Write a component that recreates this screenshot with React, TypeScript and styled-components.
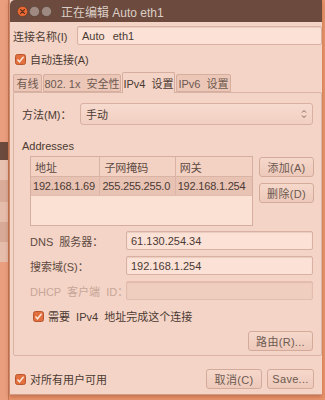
import React from 'react';
import styled, { createGlobalStyle } from 'styled-components';

const GlobalStyle = createGlobalStyle`
  html, body {
    margin: 0;
    padding: 0;
    background: #e9946c;
  }
  * {
    box-sizing: border-box;
  }
`

const Page = styled.div`
  display: flex;
  width: 325px;
  height: 400px;
  background: #e9946c;
  overflow: hidden;
  font-family: "Liberation Sans", "Noto Sans CJK SC", sans-serif;
  font-size: 11px;
  color: #4b3a33;
`

const Backdrop = styled.div`
  width: 9px;
  display: flex;
  flex-direction: column;
  flex-shrink: 0;
`

const BackdropBlock = styled.div<{ $h: number; $bg: string }>`
  height: ${p => p.$h}px;
  background: ${p => p.$bg};
  border-right: 1px solid #c77a58;
`

const Window = styled.div`
  width: 313px;
  height: 395px;
  display: flex;
  flex-direction: column;
  background: #f4d4c6;
  border-left: 1px solid #c98a70;
  border-bottom: 1px solid #d29a82;
  box-shadow: 0 2px 4px rgba(120, 50, 20, 0.35);
`

const TitleBar = styled.div`
  height: 22px;
  display: flex;
  align-items: center;
  padding-left: 7px;
  background: #6c4b3e;
  border-top-left-radius: 5px;
  color: #dccfc7;
  font-size: 12px;
  flex-shrink: 0;
`

const WinButtons = styled.div`
  display: flex;
  gap: 1px;
  margin-right: 9px;
`

const TitleText = styled.span`
  white-space: nowrap;
`

const Content = styled.div`
  flex: 1;
  display: flex;
  flex-direction: column;
  padding: 4px 0 0 3px;
`

const NameRow = styled.div`
  display: flex;
  align-items: center;
  height: 19px;
`

const NameLabel = styled.span`
  width: 64px;
  white-space: nowrap;
`

const Input = styled.div<{ $disabled?: boolean }>`
  flex: 1;
  height: 19px;
  display: flex;
  align-items: center;
  padding-left: 4px;
  background: ${p => (p.$disabled ? '#efcdbf' : '#fbe1d6')};
  border: 1px solid ${p => (p.$disabled ? '#e2bcad' : '#d8b1a2')};
  border-radius: 2px;
  box-shadow: inset 0 1px 1px rgba(150, 90, 60, 0.15);
  color: #4b3a33;
  white-space: pre;
  word-spacing: 1px;
`

const CheckRow = styled.div<{ $mt: number; $ml: number }>`
  display: flex;
  align-items: center;
  gap: 4px;
  margin-top: ${p => p.$mt}px;
  margin-left: ${p => p.$ml}px;
  height: 14px;
  white-space: nowrap;
`

const Tabs = styled.div`
  display: flex;
  align-items: flex-end;
  margin-top: 6px;
  height: 20px;
  position: relative;
  z-index: 1;
`

const Tab = styled.div<{ $active?: boolean; $w: number }>`
  width: ${p => p.$w}px;
  height: ${p => (p.$active ? 21 : 18)}px;
  display: flex;
  align-items: center;
  justify-content: center;
  margin-right: 1px;
  background: ${p => (p.$active ? '#f4d4c6' : '#ecc7b8')};
  border: 1px solid #d6ae9f;
  border-bottom: ${p => (p.$active ? 'none' : '1px solid #d6ae9f')};
  border-radius: 2px 2px 0 0;
  color: ${p => (p.$active ? '#4b3a33' : '#6d5950')};
  white-space: pre;
  margin-bottom: ${p => (p.$active ? -1 : 0)}px;
`

const Panel = styled.div`
  height: 264px;
  display: flex;
  flex-direction: column;
  padding: 10px 8px 0 8px;
  border: 1px solid #d9b4a5;
  border-radius: 0 2px 2px 2px;
`

const MethodRow = styled.div`
  display: flex;
  align-items: center;
`

const MethodLabel = styled.span`
  width: 58px;
  white-space: nowrap;
`

const Combo = styled.div`
  flex: 1;
  height: 22px;
  display: flex;
  align-items: center;
  justify-content: space-between;
  padding: 0 5px 0 5px;
  background: linear-gradient(#f7dbcf, #f1cfc1);
  border: 1px solid #d8b1a2;
  border-radius: 3px;
`

const SectionTitle = styled.div`
  margin-top: 14px;
  height: 14px;
  line-height: 14px;
`

const AddrBlock = styled.div`
  display: flex;
  gap: 6px;
  margin-top: 3px;
  margin-left: 8px;
`

const Table = styled.div`
  width: 223px;
  height: 70px;
  display: flex;
  flex-direction: column;
  background: #fbe0d4;
  border: 1px solid #d6ae9f;
`

const TRow = styled.div<{ $header?: boolean }>`
  display: flex;
  height: ${p => (p.$header ? 20 : 19)}px;
  background: ${p => (p.$header ? '#f3d2c4' : '#e8c2b3')};
  border-bottom: 1px solid ${p => (p.$header ? '#d9b3a4' : '#e3bbab')};
`

const TCell = styled.div<{ $w: number; $header?: boolean }>`
  width: ${p => p.$w}px;
  display: flex;
  align-items: center;
  padding-left: ${p => (p.$header ? 4 : 2)}px;
  border-right: 1px solid ${p => (p.$header ? '#d9b3a4' : '#ddb5a6')};
  white-space: nowrap;
  overflow: hidden;
  letter-spacing: ${p => (p.$header ? 0 : -0.2)}px;
  color: ${p => (p.$header ? '#5d4a42' : '#4b3a33')};
  &:last-child {
    border-right: none;
  }
`

const SideButtons = styled.div`
  display: flex;
  flex-direction: column;
  gap: 6px;
  margin-top: 1px;
`

const Button = styled.div<{ $w: number }>`
  width: ${p => p.$w}px;
  height: 20px;
  display: flex;
  align-items: center;
  justify-content: center;
  background: linear-gradient(#f6d8cb, #edc9ba);
  border: 1px solid #d4ab9b;
  border-radius: 3px;
  color: #6d5950;
  white-space: nowrap;
  letter-spacing: 0.3px;
`

const Fields = styled.div`
  display: flex;
  flex-direction: column;
  gap: 6px;
  margin-top: 5px;
  margin-left: 8px;
`

const FieldRow = styled.div`
  display: flex;
  align-items: center;
`

const FieldLabel = styled.span<{ $disabled?: boolean }>`
  width: 96px;
  white-space: pre;
  color: ${p => (p.$disabled ? '#c7a698' : '#5d4a42')};
`

const RightRow = styled.div`
  display: flex;
  justify-content: flex-end;
  margin-top: 8px;
`

const BottomRow = styled.div`
  display: flex;
  align-items: center;
  margin-top: 13px;
  padding-right: 8px;
`

const Spacer = styled.div`
  flex: 1;
`

const BottomButtons = styled.div`
  display: flex;
  gap: 5px;
`

const Dot = ({ color, close }: { color: string; close?: boolean }) => (
  <svg width="11" height="11" viewBox="0 0 11 11">
    <circle cx="5.5" cy="5.5" r="5" fill={color} stroke="rgba(0,0,0,0.25)" strokeWidth="0.8" />
    {close ? (
      <path d="M3.6 3.6 L7.4 7.4 M7.4 3.6 L3.6 7.4" stroke="#5a2a18" strokeWidth="1.3" strokeLinecap="round" />
    ) : null}
  </svg>
);

const Check = () => (
  <svg width="11" height="11" viewBox="0 0 11 11">
    <rect x="0.5" y="0.5" width="10" height="10" rx="2" fill="#e2703f" stroke="#b85530" />
    <path d="M2.5 5.6 L4.5 7.8 L8.6 2.8" fill="none" stroke="#fbe4d8" strokeWidth="1.5" />
  </svg>
);

const ComboArrows = () => (
  <svg width="6" height="10" viewBox="0 0 6 10">
    <path d="M1 3.5 L3 1.5 L5 3.5 M1 6.5 L3 8.5 L5 6.5" fill="none" stroke="#7a6259" strokeWidth="1" />
  </svg>
);

export default function App() {
  return (
    <Page>
      <GlobalStyle />
      <Backdrop>
        <BackdropBlock $h={142} $bg="#ea9e7e" />
        <BackdropBlock $h={18} $bg="#6c4a3d" />
        <BackdropBlock $h={20} $bg="#e9c1b1" />
        <BackdropBlock $h={22} $bg="#d9ab98" />
        <BackdropBlock $h={20} $bg="#e6bcab" />
        <BackdropBlock $h={20} $bg="#d7a996" />
        <BackdropBlock $h={20} $bg="#e6bcab" />
        <BackdropBlock $h={138} $bg="#ea9e7e" />
      </Backdrop>
      <Window>
        <TitleBar>
          <WinButtons>
            <Dot color="#ec6a35" close />
            <Dot color="#9e8a80" />
            <Dot color="#9e8a80" />
          </WinButtons>
          <TitleText>正在编辑 Auto eth1</TitleText>
        </TitleBar>
        <Content>
          <NameRow>
            <NameLabel>连接名称(I)</NameLabel>
            <Input>{'Auto  eth1'}</Input>
          </NameRow>
          <CheckRow $mt={7} $ml={2}>
            <Check />
            <span>自动连接(A)</span>
          </CheckRow>
          <Tabs>
            <Tab $w={29}>有线</Tab>
            <Tab $w={78}>{'802. 1x  安全性'}</Tab>
            <Tab $w={53} $active>{'IPv4  设置'}</Tab>
            <Tab $w={55}>{'IPv6  设置'}</Tab>
          </Tabs>
          <Panel>
            <MethodRow>
              <MethodLabel>方法(M)：</MethodLabel>
              <Combo>
                <span>手动</span>
                <ComboArrows />
              </Combo>
            </MethodRow>
            <SectionTitle>Addresses</SectionTitle>
            <AddrBlock>
              <Table>
                <TRow $header>
                  <TCell $w={70} $header>地址</TCell>
                  <TCell $w={76} $header>子网掩码</TCell>
                  <TCell $w={77} $header>网关</TCell>
                </TRow>
                <TRow>
                  <TCell $w={70}>192.168.1.69</TCell>
                  <TCell $w={76}>255.255.255.0</TCell>
                  <TCell $w={77}>192.168.1.254</TCell>
                </TRow>
              </Table>
              <SideButtons>
                <Button $w={55}>添加(A)</Button>
                <Button $w={55}>删除(D)</Button>
              </SideButtons>
            </AddrBlock>
            <Fields>
              <FieldRow>
                <FieldLabel>{'DNS  服务器：'}</FieldLabel>
                <Input>61.130.254.34</Input>
              </FieldRow>
              <FieldRow>
                <FieldLabel>搜索域(S)：</FieldLabel>
                <Input>192.168.1.254</Input>
              </FieldRow>
              <FieldRow>
                <FieldLabel $disabled>{'DHCP  客户端  ID：'}</FieldLabel>
                <Input $disabled />
              </FieldRow>
            </Fields>
            <CheckRow $mt={9} $ml={11}>
              <Check />
              <span style={{ whiteSpace: 'pre' }}>{'需要  IPv4  地址完成这个连接'}</span>
            </CheckRow>
            <RightRow>
              <Button $w={65}>路由(R)...</Button>
            </RightRow>
          </Panel>
          <BottomRow>
            <CheckRow $mt={0} $ml={2}>
              <Check />
              <span>对所有用户可用</span>
            </CheckRow>
            <Spacer />
            <BottomButtons>
              <Button $w={56}>取消(C)</Button>
              <Button $w={47}>Save...</Button>
            </BottomButtons>
          </BottomRow>
        </Content>
      </Window>
    </Page>
  );
}
